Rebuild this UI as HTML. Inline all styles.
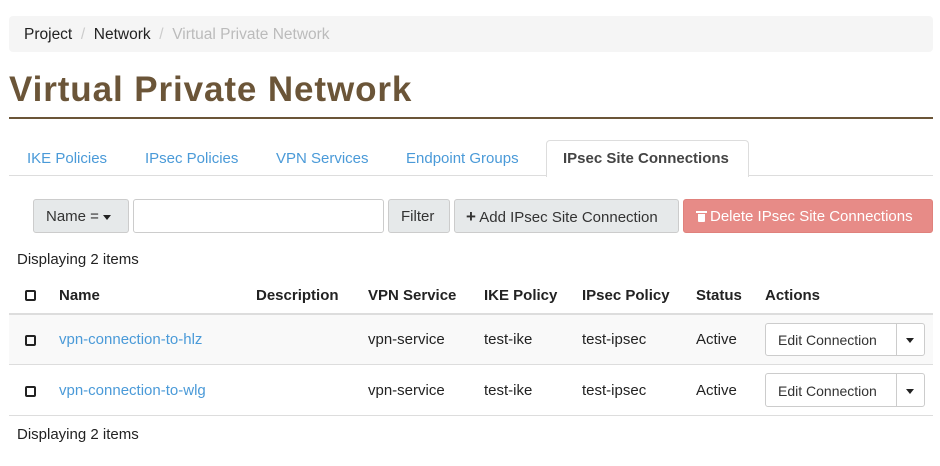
<!DOCTYPE html>
<html><head><style>
body{margin:0;width:940px;height:466px;background:#fff;font-family:"Liberation Sans",sans-serif;font-size:15px;color:#222;position:relative;overflow:hidden}
.a{position:absolute;white-space:nowrap;line-height:20px;margin-top:1px}
.box{position:absolute;box-sizing:border-box}
.lnk{color:#4a9ad8}
.b{font-weight:bold}
.cb{position:absolute;width:11px;height:11px;border:2px solid #222;border-radius:2px;box-sizing:border-box}
.caret{display:inline-block;width:0;height:0;border-left:4px solid transparent;border-right:4px solid transparent;border-top:5px solid #222;vertical-align:middle}
.trash{display:inline-block;position:relative;width:9px;height:11px;vertical-align:-1px;margin-right:4px}
.trash:before{content:"";position:absolute;left:-1px;top:0;width:11px;height:2px;background:#fff}
.trash:after{content:"";position:absolute;left:1px;top:3px;width:7px;height:8px;background:#fff;border-radius:0 0 1px 1px}
</style></head><body>
<div class="box" style="left:9px;top:16px;width:924px;height:36px;background:#f5f5f5;border-radius:4px"></div>
<div class="a" style="left:24px;top:24px;font-size:15.5px">Project <span style="color:#ccc">&nbsp;/&nbsp;</span> Network <span style="color:#ccc">&nbsp;/&nbsp;</span> <span style="color:#bbb">Virtual Private Network</span></div>
<div class="a b" style="left:9px;top:69px;font-size:35px;line-height:40px;color:#6b5538;letter-spacing:0.9px">Virtual Private Network</div>
<div class="box" style="left:9px;top:117px;width:924px;height:2px;background:#6b5538"></div>
<div class="box" style="left:9px;top:175px;width:924px;height:1px;background:#ddd"></div>
<div class="box" style="left:546px;top:140px;width:203px;height:37px;background:#fff;border:1px solid #ddd;border-bottom:none;border-radius:4px 4px 0 0"></div>
<div class="a lnk" style="left:27px;top:148px">IKE Policies</div>
<div class="a lnk" style="left:145px;top:148px">IPsec Policies</div>
<div class="a lnk" style="left:276px;top:148px">VPN Services</div>
<div class="a lnk" style="left:406px;top:148px">Endpoint Groups</div>
<div class="a b" style="left:563px;top:148px;color:#444">IPsec Site Connections</div>

<div class="box" style="left:33px;top:199px;width:96px;height:34px;background:#e6e9ea;border:1px solid #ccc;border-radius:3px"></div>
<div class="a" style="left:46px;top:206px;color:#333">Name = <span class="caret"></span></div>
<div class="box" style="left:133px;top:199px;width:251px;height:34px;border:1px solid #ccc;border-radius:3px"></div>
<div class="box" style="left:388px;top:199px;width:62px;height:34px;background:#e6e9ea;border:1px solid #ccc;border-radius:3px"></div>
<div class="a" style="left:401px;top:206px;color:#333">Filter</div>
<div class="box" style="left:454px;top:199px;width:225px;height:34px;background:#e6e9ea;border:1px solid #ccc;border-radius:3px"></div>
<div class="a" style="left:466px;top:206px;color:#333"><b style="font-size:17px">+</b> Add IPsec Site Connection</div>
<div class="box" style="left:683px;top:199px;width:250px;height:34px;background:#e78b87;border:1px solid #e0817c;border-radius:3px"></div>
<div class="a" style="left:697px;top:206px;color:#fff"><span class="trash"></span>Delete IPsec Site Connections</div>

<div class="a" style="left:17px;top:249px">Displaying 2 items</div>
<div class="cb" style="left:25px;top:290px"></div>
<div class="a b" style="left:59px;top:285px">Name</div>
<div class="a b" style="left:256px;top:285px">Description</div>
<div class="a b" style="left:368px;top:285px">VPN Service</div>
<div class="a b" style="left:484px;top:285px">IKE Policy</div>
<div class="a b" style="left:582px;top:285px">IPsec Policy</div>
<div class="a b" style="left:696px;top:285px">Status</div>
<div class="a b" style="left:765px;top:285px">Actions</div>
<div class="box" style="left:9px;top:313px;width:924px;height:2px;background:#ddd"></div>
<div class="box" style="left:9px;top:315px;width:924px;height:49px;background:#f9f9f9"></div>
<div class="box" style="left:9px;top:364px;width:924px;height:1px;background:#ddd"></div>
<div class="box" style="left:9px;top:415px;width:924px;height:1px;background:#ddd"></div>

<div class="cb" style="left:25px;top:335px"></div>
<div class="a lnk" style="left:59px;top:329px">vpn-connection-to-hlz</div>
<div class="a" style="left:368px;top:329px">vpn-service</div>
<div class="a" style="left:484px;top:329px">test-ike</div>
<div class="a" style="left:582px;top:329px">test-ipsec</div>
<div class="a" style="left:696px;top:329px">Active</div>
<div class="box" style="left:765px;top:323px;width:160px;height:33px;border:1px solid #ccc;border-radius:3px;background:#fff"></div>
<div class="box" style="left:896px;top:323px;width:1px;height:33px;background:#ccc"></div>
<div class="a" style="left:778px;top:329px;font-size:14px;color:#333">Edit Connection</div>
<div class="a" style="left:906px;top:329px"><span class="caret"></span></div>

<div class="cb" style="left:25px;top:386px"></div>
<div class="a lnk" style="left:59px;top:380px">vpn-connection-to-wlg</div>
<div class="a" style="left:368px;top:380px">vpn-service</div>
<div class="a" style="left:484px;top:380px">test-ike</div>
<div class="a" style="left:582px;top:380px">test-ipsec</div>
<div class="a" style="left:696px;top:380px">Active</div>
<div class="box" style="left:765px;top:373px;width:160px;height:34px;border:1px solid #ccc;border-radius:3px;background:#fff"></div>
<div class="box" style="left:896px;top:373px;width:1px;height:34px;background:#ccc"></div>
<div class="a" style="left:778px;top:380px;font-size:14px;color:#333">Edit Connection</div>
<div class="a" style="left:906px;top:380px"><span class="caret"></span></div>

<div class="a" style="left:17px;top:424px">Displaying 2 items</div>
</body></html>
